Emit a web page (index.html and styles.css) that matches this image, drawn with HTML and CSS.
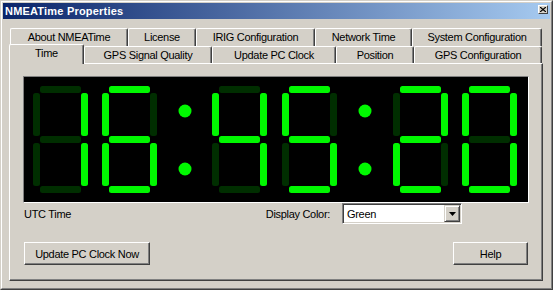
FILE: index.html
```html
<!DOCTYPE html>
<html lang="en">
<head>
  <meta charset="UTF-8">
  <title>NMEATime Properties</title>
  <link rel="stylesheet" href="styles.css">
</head>
<body>
  <div class="window">
    <div class="frame">
      <div class="titlebar">
        <span class="title">NMEATime Properties</span>
        <span class="close-btn">
          <svg width="6" height="5" viewBox="0 0 6 5"><path d="M0 0L6 5M6 0L0 5" stroke="#000" stroke-width="1.2"/></svg>
        </span>
      </div>
      <div class="dialog">
        <div class="tabs">
          <div class="tab-row back">
            <div class="tab w-about">About NMEATime</div>
            <div class="tab w-license">License</div>
            <div class="tab w-irig">IRIG Configuration</div>
            <div class="tab w-network">Network Time</div>
            <div class="tab w-system">System Configuration</div>
          </div>
          <div class="tab-row front">
            <div class="tab selected w-time">Time</div>
            <div class="tab w-signal">GPS Signal Quality</div>
            <div class="tab w-update">Update PC Clock</div>
            <div class="tab w-position">Position</div>
            <div class="tab w-gpsconf">GPS Configuration</div>
          </div>
        </div>
        <div class="panel">
          <!-- seven segment clock -->
          <div class="display">
            <svg width="504" height="125" viewBox="0 0 504 125">
              <defs>
                <rect id="sa" x="7" y="0" width="41" height="7" rx="2.5"/>
                <rect id="sb" x="48" y="7" width="7" height="43" rx="2.5"/>
                <rect id="sc" x="48" y="57" width="7" height="43" rx="2.5"/>
                <rect id="sd" x="7" y="100" width="41" height="7" rx="2.5"/>
                <rect id="se" x="0" y="57" width="7" height="43" rx="2.5"/>
                <rect id="sf" x="0" y="7" width="7" height="43" rx="2.5"/>
                <rect id="sg" x="7" y="50" width="41" height="7" rx="2.5"/>
              </defs>
              <g transform="translate(9,9)">
                <use href="#sa" class="off"/><use href="#sb" class="on"/><use href="#sc" class="on"/><use href="#sd" class="off"/>
                <use href="#se" class="off"/><use href="#sf" class="off"/><use href="#sg" class="off"/>
              </g>
              <g transform="translate(78,9)">
                <use href="#sa" class="on"/><use href="#sb" class="off"/><use href="#sc" class="on"/><use href="#sd" class="on"/>
                <use href="#se" class="on"/><use href="#sf" class="on"/><use href="#sg" class="on"/>
              </g>
              <circle class="on" cx="161" cy="34" r="6.5"/>
              <circle class="on" cx="161" cy="92" r="6.5"/>
              <g transform="translate(188,9)">
                <use href="#sa" class="off"/><use href="#sb" class="on"/><use href="#sc" class="on"/><use href="#sd" class="off"/>
                <use href="#se" class="off"/><use href="#sf" class="on"/><use href="#sg" class="on"/>
              </g>
              <g transform="translate(258,9)">
                <use href="#sa" class="on"/><use href="#sb" class="off"/><use href="#sc" class="on"/><use href="#sd" class="on"/>
                <use href="#se" class="off"/><use href="#sf" class="on"/><use href="#sg" class="on"/>
              </g>
              <circle class="on" cx="341" cy="34" r="6.5"/>
              <circle class="on" cx="341" cy="92" r="6.5"/>
              <g transform="translate(369,9)">
                <use href="#sa" class="on"/><use href="#sb" class="on"/><use href="#sc" class="off"/><use href="#sd" class="on"/>
                <use href="#se" class="on"/><use href="#sf" class="off"/><use href="#sg" class="on"/>
              </g>
              <g transform="translate(438,9)">
                <use href="#sa" class="on"/><use href="#sb" class="on"/><use href="#sc" class="on"/><use href="#sd" class="on"/>
                <use href="#se" class="on"/><use href="#sf" class="on"/><use href="#sg" class="off"/>
              </g>
            </svg>
          </div>
          <div class="info-row">
            <span class="utc-label">UTC Time</span>
            <span class="color-label">Display Color:</span>
            <div class="combo">
              <span class="combo-value">Green</span>
              <span class="combo-btn">
                <svg width="7" height="4" viewBox="0 0 7 4"><polygon points="0,0 7,0 3.5,4" fill="#000"/></svg>
              </span>
            </div>
          </div>
          <div class="button-row">
            <button class="btn btn-update">Update PC Clock Now</button>
            <button class="btn btn-help">Help</button>
          </div>
        </div>
      </div>
    </div>
  </div>
</body>
</html>
```
FILE: styles.css
```css
body {
  margin: 0;
  background: #d4d0c8;
  color: #000;
  font-family: "Liberation Sans", Arial, sans-serif;
  font-size: 11px;
  letter-spacing: -0.3px;
}
.window {
  width: 553px;
  height: 290px;
  box-sizing: border-box;
  border: 1px solid;
  border-color: #d4d0c8 #404040 #404040 #d4d0c8;
  background: #d4d0c8;
}
.frame {
  height: 100%;
  box-sizing: border-box;
  border: 1px solid;
  border-color: #fff #808080 #808080 #fff;
  padding: 1px;
}
.titlebar {
  height: 16px;
  display: flex;
  justify-content: space-between;
  padding: 0 2px;
  background: linear-gradient(to right, #0a246a, #a6caf0);
}
.title {
  color: #fff;
  font-weight: bold;
  line-height: 16px;
  letter-spacing: 0.2px;
}
.close-btn {
  margin-top: 2px;
  width: 10px;
  height: 9px;
  box-sizing: border-box;
  border: 1px solid;
  border-color: #fff #404040 #404040 #fff;
  background: #d4d0c8;
  display: flex;
  align-items: center;
  justify-content: center;
}
.close-btn svg {
  display: block;
}
.dialog {
  padding: 9px 0 0 6px;
}
.tabs {
  width: 534px;
}
.tab-row {
  display: flex;
}
.tab-row.back {
  margin-left: 1px;
  height: 18px;
}
.tab-row.front {
  height: 17px;
  align-items: flex-end;
}
.tab {
  box-sizing: border-box;
  height: 18px;
  border-top: 1px solid #fff;
  border-left: 1px solid #fff;
  border-right: 1px solid #404040;
  border-radius: 2px 2px 0 0;
  box-shadow: inset -1px 0 #808080;
  background: #d4d0c8;
  text-align: center;
  line-height: 16px;
  white-space: nowrap;
}
.front .tab {
  height: 17px;
}
.front .tab.selected {
  height: 20px;
  margin-bottom: -1px;
  position: relative;
  z-index: 2;
}
.w-about { width: 118px; }
.w-license { width: 68px; }
.w-irig { width: 119px; }
.w-network { width: 97px; }
.w-system { width: 130px; }
.w-time { width: 75px; }
.w-signal { width: 128px; }
.w-update { width: 124px; }
.w-position { width: 78px; }
.w-gpsconf { width: 128px; }

.panel {
  width: 534px;
  height: 218px;
  box-sizing: border-box;
  border: 1px solid;
  border-color: #fff #404040 #404040 #fff;
  box-shadow: inset -1px -1px #808080;
  padding: 12px 13px 0 13px;
}
.display {
  width: 506px;
  height: 127px;
  box-sizing: border-box;
  border: 1px solid;
  border-color: #808080 #fff #fff #808080;
  background: #000;
}
.display svg {
  display: block;
}
.on {
  fill: #00f800;
}
.off {
  fill: #002e00;
}
.info-row {
  display: flex;
  align-items: center;
  height: 21px;
  padding: 0 67px 0 1px;
}
.utc-label {
  flex: 1;
}
.color-label {
  margin-right: 12px;
}
.combo {
  width: 120px;
  height: 21px;
  box-sizing: border-box;
  border: 1px solid;
  border-color: #808080 #fff #fff #808080;
  box-shadow: inset 1px 1px #404040, inset -1px -1px #d4d0c8;
  background: #fff;
  padding: 1px;
  display: flex;
  align-items: center;
}
.combo-value {
  flex: 1;
  padding-left: 3px;
}
.combo-btn {
  width: 16px;
  height: 17px;
  box-sizing: border-box;
  border: 1px solid;
  border-color: #d4d0c8 #404040 #404040 #d4d0c8;
  box-shadow: inset 1px 1px #fff, inset -1px -1px #808080;
  background: #d4d0c8;
  display: flex;
  align-items: center;
  justify-content: center;
}
.combo-btn svg {
  display: block;
}
.button-row {
  display: flex;
  justify-content: space-between;
  margin-top: 18px;
  padding: 0 1px;
}
.btn {
  height: 23px;
  box-sizing: border-box;
  border: 1px solid;
  border-color: #fff #404040 #404040 #fff;
  box-shadow: inset -1px -1px #808080;
  background: #d4d0c8;
  color: #000;
  font-family: inherit;
  font-size: 11px;
  letter-spacing: inherit;
  padding: 0;
}
.btn-update {
  width: 126px;
}
.btn-help {
  width: 75px;
}
```
